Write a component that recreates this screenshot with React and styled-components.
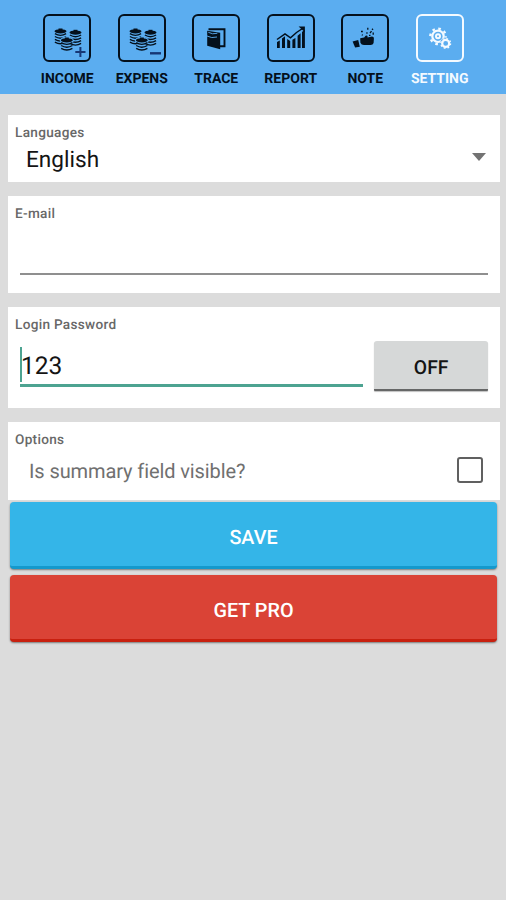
import React from 'react'
import styled, { createGlobalStyle } from 'styled-components'

const GlobalStyle = createGlobalStyle`
  * {
    box-sizing: border-box;
  }

  body {
    margin: 0;
    background-color: #dcdcdc;
    font-family: Roboto, 'Liberation Sans', sans-serif;
    text-rendering: geometricPrecision;
  }
`

const Screen = styled.div`
  width: 506px;
  height: 900px;
  overflow: hidden;
  background-color: #dcdcdc;
`

const TabBar = styled.nav`
  display: flex;
  height: 94px;
  padding: 14px 29px 0 30px;
  background-color: #5badf0;
`

const Tab = styled.a`
  flex: 1;
  display: flex;
  flex-direction: column;
  align-items: center;
  color: ${({ $active }) => ($active ? '#f4faff' : '#04101c')};

  span {
    margin-top: 9px;
    font-size: 14px;
    line-height: 16px;
    font-weight: 700;
    white-space: nowrap;
  }
`

const TabIcon = styled.div`
  width: 48px;
  height: 48px;
  border: 2px solid currentColor;
  border-radius: 6px;

  svg {
    display: block;
    margin: -2px;
  }
`

const Content = styled.main`
  display: flex;
  flex-direction: column;
  gap: 14px;
  padding: 20.6px 6px 0 8px;
`

const Card = styled.section`
  height: ${({ $height }) => $height}px;
  padding: 10px 12px 0 7px;
  background-color: #fff;
`

const Label = styled.h2`
  margin: 0;
  font-size: 13.6px;
  line-height: 16px;
  font-weight: 500;
  letter-spacing: 0.3px;
  color: #686868;
`

const Select = styled.div`
  display: flex;
  align-items: center;
  justify-content: space-between;
  height: 36px;
  padding: 1px 2px 0 11px;
  font-size: 22.6px;
  color: #141414;

  svg {
    margin-top: -4px;
  }
`

const EmailField = styled.div`
  height: 53px;
  margin-left: 5px;
  border-bottom: 2px solid #8f8f8f;
`

const PasswordRow = styled.div`
  display: flex;
  gap: 11px;
  padding-left: 5px;
`

const PasswordField = styled.div`
  width: 344px;
  height: 54px;
  padding-top: 14px;
  border-bottom: 3px solid #4da391;
`

const PasswordValue = styled.div`
  height: 35px;
  padding-top: 1px;
  border-left: 2px solid #4da391;
  font-size: 24.5px;
  line-height: 35px;
  color: #141414;

  span {
    margin-left: -1px;
  }
`

const ToggleButton = styled.button`
  width: 114px;
  height: 50px;
  margin-top: 8px;
  padding: 5px 0 0;
  border: 0;
  border-bottom: 2px solid #666767;
  border-radius: 3px 3px 1px 1px;
  background-color: #d6d8d8;
  box-shadow: 0 1px 1px rgba(0, 0, 0, 0.25);
  font-family: inherit;
  font-size: 19.3px;
  font-weight: 500;
  text-rendering: inherit;
  color: #141414;
`

const OptionRow = styled.div`
  display: flex;
  align-items: center;
  justify-content: space-between;
  height: 45px;
  padding: 0 5px 0 14px;
  font-size: 20px;
  letter-spacing: -0.1px;
  color: #707070;

  > span:first-child {
    padding-top: 2px;
  }
`

const Checkbox = styled.span`
  width: 26px;
  height: 26px;
  margin-top: -1px;
  border: 2px solid #606060;
  border-radius: 3px;
`

const Actions = styled.div`
  display: flex;
  flex-direction: column;
  gap: 6px;
  padding: 2px 9px 0 10px;
`

const ActionButton = styled.button`
  height: 67px;
  padding: 6px 0 0;
  border: 0;
  border-bottom: 3px solid ${({ $edge }) => $edge};
  border-radius: 4px;
  background-color: ${({ $color }) => $color};
  box-shadow: 0 1px 2px rgba(0, 0, 0, 0.45);
  font-family: inherit;
  font-size: 19.8px;
  font-weight: 500;
  text-rendering: inherit;
  color: #fff;
`

function Icon({ children }) {
  return <svg width="48" height="48" viewBox="0 0 48 48" fill="currentColor">{children}</svg>
}

function CoinStack({ x, y, layers }) {
  return (
    <g transform={`translate(${x} ${y})`}>
      <ellipse rx="6" ry="2.1" />
      <path d="M-2 -2.8h4v1.8h-4z" />
      {Array.from({ length: layers }, (_, i) => (
        <path
          key={i}
          d={`M-5.6 ${2.4 + i * 2.8}q5.6 3.4 11.2 0`}
          fill="none"
          stroke="currentColor"
          strokeWidth="1.4"
        />
      ))}
    </g>
  )
}

function Coins({ children }) {
  return (
    <Icon>
      <CoinStack x={17.5} y={17.3} layers={4} />
      <CoinStack x={32.5} y={18.6} layers={4} />
      <ellipse cx="23.8" cy="26.5" rx="7" ry="4" fill="#5badf0" />
      <CoinStack x={23.8} y={26.3} layers={3} />
      {children}
    </Icon>
  )
}

const IncomeIcon = () => (
  <Coins><path d="M37.4 33v10M32.3 38h10.2" stroke="#173775" strokeWidth="2" /></Coins>
)

const ExpenseIcon = () => (
  <Coins><path d="M32 39.3h11" stroke="#173775" strokeWidth="2.4" /></Coins>
)

const TraceIcon = () => (
  <Icon>
    <path d="M16.5 15.2h16v17h-4.5" fill="none" stroke="currentColor" strokeWidth="1.9" />
    <path d="M15.2 16.8l13 2V35.2l-13-3.4z" />
    <path d="M16.3 18.3q4 2.4 9 1M15 22q4.5 2.6 10 1" fill="none" stroke="#5badf0" strokeWidth="0.9" />
  </Icon>
)

const ReportIcon = () => (
  <Icon>
    <path d="M10 28l2.8-1.6V34H10zM15 24.5l3-2.3V34h-3zM20.2 25l3 2V34h-3zM25.4 25.8l3-1.8V34h-3zM30.6 21.8l3-2.6V34h-3zM35 18l2.9-2.4V34H35z" />
    <path d="M10 25.5L18 19.8 23.5 23.8 29.5 18.5 35.5 14.5" fill="none" stroke="currentColor" strokeWidth="1.5" />
    <path d="M31.6 12.6h6.3v5.6z" />
  </Icon>
)

const NoteIcon = () => (
  <Icon>
    <path d="M11.6 27.5l5.6-1.4 1.6 6.6-4.7.8z" />
    <path d="M19.2 24.3l4-.8 1.4-1.8q1.7-.7 2 .7l-.1 1.2 4.4-1.2q2.2.2 2 2l-.3 4.6q-.6 2-3 2h-6.2q-3 .2-4-2.2z" />
    <path d="M20 17.5h1.8M26.8 13.8v2M31 14.8l1 1.1M25.3 19h1.3M30.5 17.2l-1.5 2M20.8 20.7l1 .6M32.2 18.5v2.2M28 21.3h1.5" stroke="currentColor" strokeWidth="1.3" />
  </Icon>
)

const SettingIcon = () => (
  <Icon>
    <g fill="none" stroke="currentColor">
      <circle cx="22" cy="22.3" r="5.7" strokeWidth="2.2" />
      <circle cx="22" cy="22.3" r="7.7" strokeWidth="2.4" strokeDasharray="2.6 3.45" />
      <circle cx="22" cy="22.3" r="2" strokeWidth="2" />
      <circle cx="29.7" cy="29.4" r="5.4" fill="#5badf0" stroke="#5badf0" />
      <circle cx="29.7" cy="29.4" r="3.5" strokeWidth="2.2" />
      <circle cx="29.7" cy="29.4" r="4.9" strokeWidth="1.3" strokeDasharray="1.8 2.05" />
    </g>
  </Icon>
)

const tabs = [
  { name: 'INCOME', icon: IncomeIcon },
  { name: 'EXPENS', icon: ExpenseIcon },
  { name: 'TRACE', icon: TraceIcon },
  { name: 'REPORT', icon: ReportIcon },
  { name: 'NOTE', icon: NoteIcon },
  { name: 'SETTING', icon: SettingIcon, active: true },
]

function App() {
  return (
    <Screen>
      <GlobalStyle />
      <TabBar>
        {tabs.map(({ name, icon: Glyph, active }) => (
          <Tab key={name} $active={active}>
            <TabIcon><Glyph /></TabIcon>
            <span>{name}</span>
          </Tab>
        ))}
      </TabBar>

      <Content>
        <Card $height={67}>
          <Label>Languages</Label>
          <Select>
            <span>English</span>
            <svg width="14" height="8" viewBox="0 0 14 8"><path d="M0 0h14L7 8z" fill="#737373" /></svg>
          </Select>
        </Card>

        <Card $height={97}>
          <Label>E-mail</Label>
          <EmailField />
        </Card>

        <Card $height={101}>
          <Label>Login Password</Label>
          <PasswordRow>
            <PasswordField>
              <PasswordValue><span>123</span></PasswordValue>
            </PasswordField>
            <ToggleButton>OFF</ToggleButton>
          </PasswordRow>
        </Card>

        <Card $height={78.6}>
          <Label>Options</Label>
          <OptionRow>
            <span>Is summary field visible?</span>
            <Checkbox />
          </OptionRow>
        </Card>
      </Content>

      <Actions>
        <ActionButton $color="#34b5e8" $edge="#1499cc">SAVE</ActionButton>
        <ActionButton $color="#da4336" $edge="#c8200f">GET PRO</ActionButton>
      </Actions>
    </Screen>
  )
}

export default App
